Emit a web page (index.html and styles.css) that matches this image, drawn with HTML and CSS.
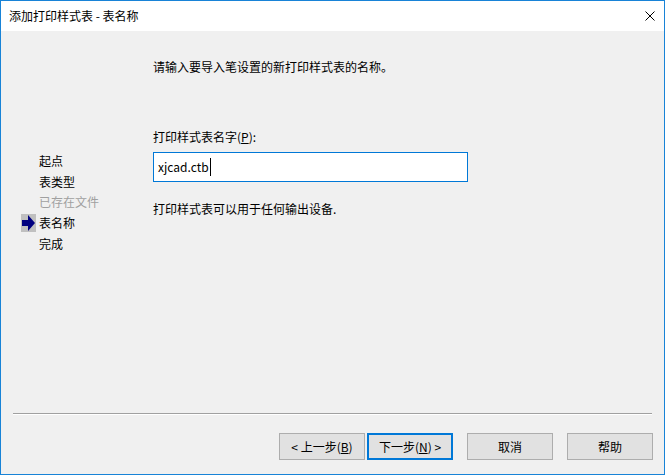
FILE: index.html
```html
<!DOCTYPE html>
<html lang="zh-CN">
  <head>
    <meta charset="UTF-8" />
    <title>添加打印样式表 - 表名称</title>
    <link rel="stylesheet" href="styles.css">
  </head>
  <body>
    <div class="window">
      <div class="titlebar">
        <span class="title">添加打印样式表 - 表名称</span>
        <svg class="close" viewBox="0 0 10 10" width="10" height="10">
          <path d="M0.5 0.5l9 9M9.5 0.5l-9 9"></path>
        </svg>
      </div>
      <div class="dialog">
        <div class="content">
          <ul class="steps">
            <li><span class="marker"></span>起点</li>
            <li><span class="marker"></span>表类型</li>
            <li class="disabled"><span class="marker"></span>已存在文件</li>
            <li class="current">
              <span class="marker">
                <svg viewBox="0 0 15 18" width="15" height="18">
                  <path d="M1 6h6V1l7 8-7 8v-5H1z"></path>
                </svg>
              </span>表名称
            </li>
            <li><span class="marker"></span>完成</li>
          </ul>
          <div class="page">
            <p class="intro">请输入要导入笔设置的新打印样式表的名称。</p>
            <label class="field-label">打印样式表名字(<u>P</u>):</label>
            <div class="textbox">xjcad.ctb<span class="caret"></span></div>
            <p class="note">打印样式表可以用于任何输出设备.</p>
          </div>
        </div>
        <div class="separator"></div>
        <div class="buttons">
          <button class="btn">&lt; 上一步(<u>B</u>)</button>
          <button class="btn btn-default">下一步(<u>N</u>) &gt;</button>
          <button class="btn btn-gap">取消</button>
          <button class="btn btn-gap">帮助</button>
        </div>
      </div>
    </div>
  </body>
</html>
```

FILE: styles.css
```css
*,
*::before,
*::after {
  box-sizing: border-box;
  margin: 0;
  padding: 0;
}

body {
  background-color: #fff;
  color: #000;
  font-family: "Noto Sans CJK SC", "Noto Sans", sans-serif;
  font-size: 12px;
  line-height: 16px;
}

.window {
  display: flex;
  flex-direction: column;
  width: 665px;
  height: 475px;
  border: 1px solid #1883d7;
}

.titlebar {
  display: flex;
  align-items: center;
  justify-content: space-between;
  height: 30px;
  padding: 0 9px 0 8px;
  background-color: #fff;
}

.close {
  stroke: #000;
  stroke-width: 1;
  fill: none;
}

.dialog {
  display: flex;
  flex-direction: column;
  flex: 1;
  background-color: #f0f0f0;
}

.content {
  display: flex;
  flex: 1;
}

.steps {
  list-style: none;
  width: 152px;
  padding: 120px 0 0 20px;
}

.steps li {
  display: flex;
  align-items: center;
  height: 20.6px;
}

.steps .disabled {
  color: #a0a0a0;
}

.marker {
  display: flex;
  width: 15px;
  height: 18px;
  margin-right: 3px;
}

.current .marker {
  background-color: #c0c0c0;
}

.marker svg {
  fill: #000080;
}

.page {
  padding-top: 28px;
}

.intro {
  margin-bottom: 54px;
}

.field-label {
  display: block;
  margin-bottom: 7px;
}

.textbox {
  display: flex;
  align-items: center;
  width: 315px;
  height: 30px;
  padding: 0 4px;
  background-color: #fff;
  border: 1px solid #0078d7;
}

.caret {
  width: 1px;
  height: 18px;
  margin-left: 1px;
  background-color: #000;
}

.note {
  margin-top: 19px;
}

.separator {
  height: 2px;
  margin: 0 12px;
  border-top: 1px solid #a0a0a0;
  border-bottom: 1px solid #fff;
}

.buttons {
  display: flex;
  justify-content: flex-end;
  gap: 2px;
  padding: 18px 11px 14px 0;
}

.btn {
  width: 86px;
  height: 27px;
  font: inherit;
  color: #000;
  background-color: #e1e1e1;
  border: 1px solid #adadad;
}

.btn-default {
  border: 2px solid #0078d7;
}

.btn-gap {
  margin-left: 12px;
}
```
